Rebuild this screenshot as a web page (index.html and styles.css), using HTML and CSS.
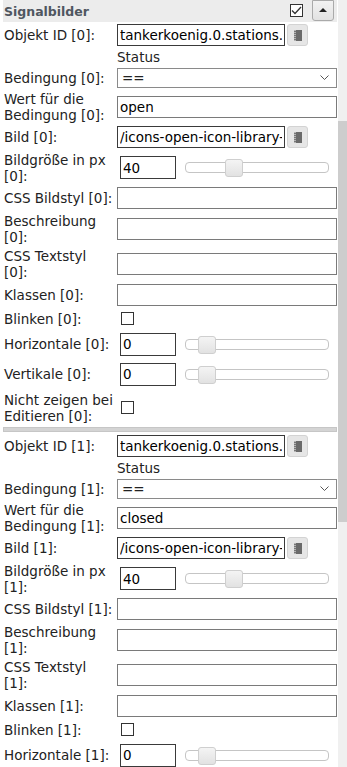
FILE: index.html
```html
<!DOCTYPE html>
<html lang="de">
<head>
    <meta charset="UTF-8">
    <title>Signalbilder</title>
    <link rel="stylesheet" href="styles.css">
</head>
<body>
    <div class="panel">
        <div class="group-head">
            <span class="title">Signalbilder</span>
            <span class="head-check">
                <svg width="11" height="9" viewBox="0 0 11 9"><path d="M1 4.5 L4 7.5 L10 1" fill="none" stroke="#333" stroke-width="1.3"/></svg>
            </span>
            <button class="collapse"><span class="arrow"></span></button>
        </div>
        <table class="attrs">
            <colgroup><col class="col-label"><col class="col-value"></colgroup>
            <tbody id="rows"></tbody>
        </table>
    </div>
    <div class="scrollbar"><div class="thumb"></div></div>

    <script>
        const pickerIcon = '<svg width="8" height="11" viewBox="0 0 8 11"><rect x="2" y="0" width="6" height="11" fill="#6a6a6a"/><rect x="0" y="0" width="2" height="11" fill="#b5b5b5"/><path d="M0 1.5h2M0 3.5h2M0 5.5h2M0 7.5h2M0 9.5h2" stroke="#777" stroke-width="1"/></svg>';
        const chevron = '<svg width="9" height="6" viewBox="0 0 9 6"><path d="M0.5 0.5 L4.5 4.5 L8.5 0.5" fill="none" stroke="#555" stroke-width="1"/></svg>';

        function slider(value, left) {
            return `<div class="slider-cell"><input class="num" value="${value}"><div class="slider"><span class="handle" style="left: ${left}px"></span></div></div>`;
        }

        function group(i, cond, image) {
            return `
            <tr class="row-text"><td class="label">Objekt ID [${i}]:</td>
                <td><div class="picker"><input class="dark" value="tankerkoenig.0.stations.0.status"><button class="pick">${pickerIcon}</button></div></td></tr>
            <tr class="row-status"><td></td><td class="hint">Status</td></tr>
            <tr class="row-select"><td class="label">Bedingung [${i}]:</td>
                <td><div class="select"><span>==</span>${chevron}</div></td></tr>
            <tr class="row-two"><td class="label">Wert für die<br>Bedingung [${i}]:</td>
                <td><input class="full" value="${cond}"></td></tr>
            <tr class="row-text"><td class="label">Bild [${i}]:</td>
                <td><div class="picker"><input class="dark" value="${image}"><button class="pick">${pickerIcon}</button></div></td></tr>
            <tr class="row-two"><td class="label">Bildgröße in px<br>[${i}]:</td>
                <td>${slider(40, 39)}</td></tr>
            <tr class="row-text"><td class="label">CSS Bildstyl [${i}]:</td>
                <td><input class="full"></td></tr>
            <tr class="row-two"><td class="label">Beschreibung<br>[${i}]:</td>
                <td><input class="full"></td></tr>
            <tr class="row-two"><td class="label">CSS Textstyl<br>[${i}]:</td>
                <td><input class="full"></td></tr>
            <tr class="row-classes"><td class="label">Klassen [${i}]:</td>
                <td><input class="full"></td></tr>
            <tr class="row-check"><td class="label">Blinken [${i}]:</td>
                <td><span class="check"></span></td></tr>
            <tr class="row-slider"><td class="label">Horizontale [${i}]:</td>
                <td>${slider(0, 12)}</td></tr>
            <tr class="row-slider"><td class="label">Vertikale [${i}]:</td>
                <td>${slider(0, 12)}</td></tr>
            <tr class="row-hide"><td class="label">Nicht zeigen bei<br>Editieren [${i}]:</td>
                <td><span class="check"></span></td></tr>
            <tr class="row-sep"><td colspan="2"><div class="sep"></div></td></tr>`;
        }

        document.getElementById('rows').innerHTML =
            group(0, 'open', '/icons-open-icon-library-png/64x64/status_online.png') +
            group(1, 'closed', '/icons-open-icon-library-png/64x64/status_offline.png');
    </script>
</body>
</html>
```

FILE: styles.css
```css
* {
    box-sizing: border-box;
}
body {
    margin: 0;
    display: flex;
    height: 767px;
    overflow: hidden;
    font-family: "DejaVu Sans", Verdana, sans-serif;
    font-size: 13.5px;
    color: #222;
    background: #fff;
}
.panel {
    width: 338px;
    padding: 0 1px 0 3px;
    overflow: hidden;
}
.scrollbar {
    width: 9px;
    background: #f0f0f0;
}
.thumb {
    margin-top: 121px;
    height: 401px;
    background: #cdcdcd;
}

.group-head {
    display: flex;
    align-items: center;
    height: 22px;
    background: #ececec;
    padding-left: 1px;
}
.title {
    flex: 1;
    font-weight: bold;
    font-size: 12.5px;
    color: #4f5660;
}
.head-check {
    width: 13px;
    height: 13px;
    border: 1px solid #333;
    background: #fff;
    display: flex;
    align-items: center;
    justify-content: center;
    margin-right: 9px;
    margin-top: -2px;
}
.collapse {
    width: 22px;
    height: 21px;
    margin: -2px 3px 0 0;
    padding: 0;
    border: 1px solid #aaa;
    border-radius: 0 0 3px 3px;
    background: linear-gradient(#f2f2f2, #e2e2e2);
    display: flex;
    align-items: center;
    justify-content: center;
}
.arrow {
    width: 0;
    height: 0;
    border-left: 4px solid transparent;
    border-right: 4px solid transparent;
    border-bottom: 4px solid #222;
}

.attrs {
    width: 334px;
    table-layout: fixed;
    border-collapse: collapse;
}
.col-label { width: 114px; }
.col-value { width: 220px; }
.attrs td {
    padding: 0;
    vertical-align: middle;
    line-height: 16px;
}
.attrs td.label {
    padding-left: 1px;
    white-space: nowrap;
}
.row-text { height: 26px; }
.row-status { height: 18px; }
.row-select { height: 23px; }
.row-two { height: 35px; }
.row-classes { height: 27px; }
.row-check { height: 21px; }
.row-slider { height: 30px; }
.row-hide { height: 37px; }
.row-sep { height: 7px; }

input {
    font: inherit;
    color: #000;
    height: 22px;
    padding: 0 2px;
    border: 1px solid #7a7a7a;
    background: #fff;
    margin: 0;
    display: block;
}
input.full { width: 220px; }
input.dark { border-color: #3a3a3a; }

.picker {
    display: flex;
    align-items: center;
}
.picker input {
    width: 168px;
}
.pick {
    width: 21px;
    height: 22px;
    margin-left: 2px;
    padding: 0;
    border: 1px solid #d3d3d3;
    border-radius: 3px;
    background: #e6e6e6;
    display: flex;
    align-items: center;
    justify-content: center;
}

.hint {
    padding-left: 0;
}

.select {
    width: 220px;
    height: 20px;
    border: 1px solid #8a8a8a;
    display: flex;
    align-items: center;
    justify-content: space-between;
    padding: 0 7px 0 4px;
}

.slider-cell {
    display: flex;
    align-items: center;
}
input.num {
    width: 56px;
    height: 23px;
    margin-left: 3px;
    border-color: #3a3a3a;
}
.slider {
    position: relative;
    width: 144px;
    height: 11px;
    margin-left: 9px;
    border: 1px solid #c5c5c5;
    border-radius: 4px;
    background: #fff;
}
.handle {
    position: absolute;
    top: -4px;
    width: 18px;
    height: 18px;
    border: 1px solid #cfcfcf;
    border-radius: 3px;
    background: linear-gradient(#f4f4f4, #e2e2e2);
}

.check {
    display: block;
    width: 13px;
    height: 13px;
    margin-left: 4px;
    border: 1px solid #333;
    background: #fff;
}

.sep {
    height: 5px;
    background: #d4d4d4;
    border: 1px solid #c6c6c6;
}
```
